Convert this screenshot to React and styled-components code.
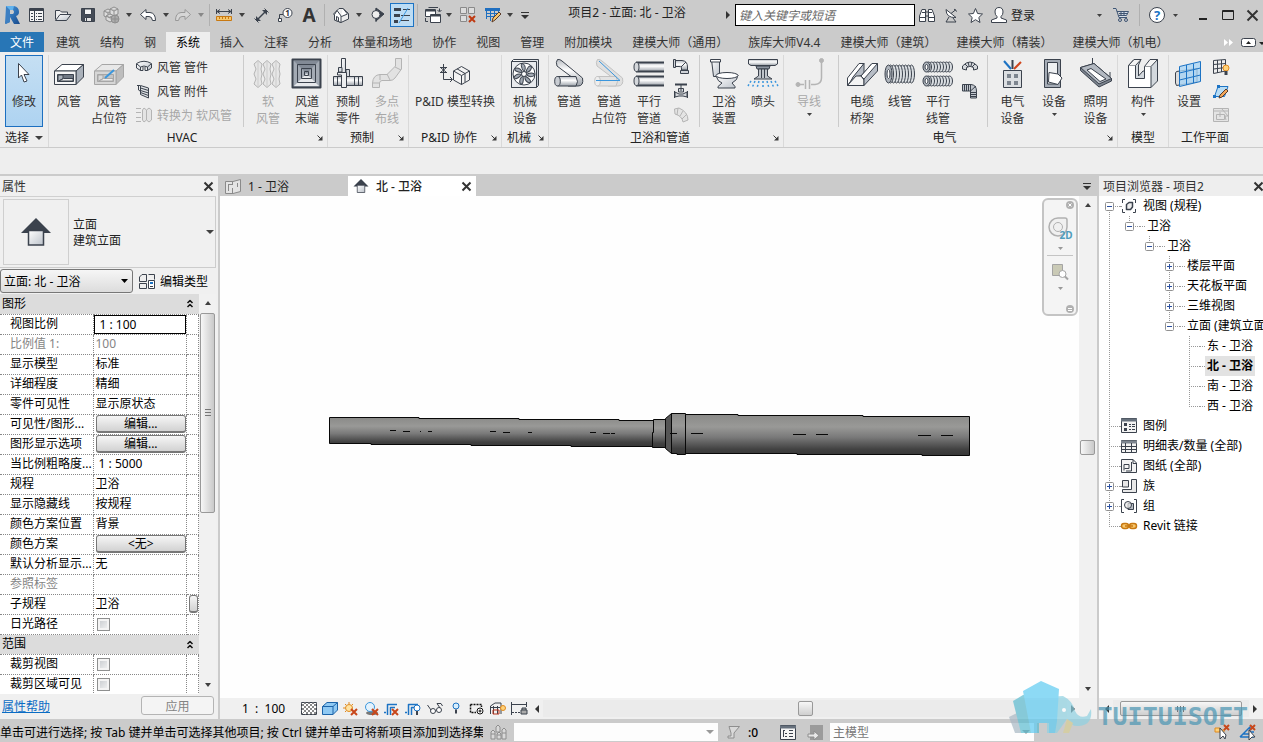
import React from 'react';

import styled, { createGlobalStyle, css } from 'styled-components';

const GlobalStyle = createGlobalStyle`
  * {
    box-sizing: border-box;
  }
  body {
    margin: 0;
    overflow: hidden;
  }
  body, button, input, select {
    font-family: "Noto Sans", "Noto Sans CJK SC", sans-serif;
    font-size: 12px;
  }
  button {
    background: none;
    border: none;
    color: inherit;
    padding: 0;
  }
  svg {
    display: block;
    flex: none;
    overflow: visible;
  }
`;

/*
 * icons
 */

const DARK = '#3b424d';
const OFF = '#b4b4b4';

const Icon = ({ w = 16, h = w, children, stroke = DARK, fill = 'none', sw = 1 }) => (
  <svg
      width={w}
      height={h}
      viewBox={`0 0 ${w} ${h}`}
      fill={fill}
      stroke={stroke}
      strokeWidth={sw}
      strokeLinejoin="round"
      aria-hidden="true">
    {children}
  </svg>
);

const Glyph = styled.text`
  fill: ${(props) => props.$color || '#333333'};
  font-family: "Noto Sans", sans-serif;
  font-size: ${(props) => props.$size}px;
  font-weight: bold;
  stroke: none;
  text-anchor: middle;
`;

const HiddenSvg = styled.svg`
  position: absolute;
`;

const Gradients = () => (
  <HiddenSvg width="0" height="0" aria-hidden="true">
    <defs>
      <linearGradient id="metal" x1="0" y1="0" x2="0" y2="1">
        <stop offset="0" stopColor="#b9bdc3" />
        <stop offset="0.4" stopColor="#ffffff" />
        <stop offset="1" stopColor="#9aa0a8" />
      </linearGradient>
      <linearGradient id="soft" x1="0" y1="0" x2="1" y2="1">
        <stop offset="0" stopColor="#ffffff" />
        <stop offset="1" stopColor="#bcc2ca" />
      </linearGradient>
      <linearGradient id="revit" x1="0" y1="0" x2="1" y2="1">
        <stop offset="0" stopColor="#4a9be0" />
        <stop offset="1" stopColor="#184a8c" />
      </linearGradient>
      <linearGradient id="pipe" x1="0" y1="0" x2="0" y2="1">
        <stop offset="0" stopColor="#8a8a88" />
        <stop offset="0.3" stopColor="#999997" />
        <stop offset="0.55" stopColor="#7a7a7a" />
        <stop offset="0.85" stopColor="#414141" />
        <stop offset="1" stopColor="#373737" />
      </linearGradient>
    </defs>
  </HiddenSvg>
);

const Caret = ({ w = 6, h = 4, color = '#404040' }) => (
  <Icon w={w} h={h} stroke="none" fill={color}><path d={`M0 0H${w}L${w / 2} ${h}Z`} /></Icon>
);
const Up = () => <Icon w={6} h={4} stroke="none" fill="#404040"><path d="M0 4H6L3 0Z" /></Icon>;
const Left = () => <Icon w={4} h={8} stroke="none" fill="#333"><path d="M4 0V8L0 4Z" /></Icon>;
const Right = () => <Icon w={4} h={8} stroke="none" fill="#333"><path d="M0 0V8L4 4Z" /></Icon>;
const MenuMark = () => <Icon w={8} h={7} stroke="none" fill="#333"><path d="M0 0H8V1H0ZM0 3H8L4 7Z" /></Icon>;
const Close = ({ w = 9, color = '#333' }) => (
  <Icon w={w} stroke={color} sw={2}><path d={`M0.5 0.5L${w - 0.5} ${w - 0.5}M${w - 0.5} 0.5L0.5 ${w - 0.5}`} /></Icon>
);
const Launcher = () => (
  <Icon w={6} stroke="#3a3a3a"><path d="M0.5 0.5L4 4" /><path d="M5.5 1V5.5H1Z" fill="#3a3a3a" stroke="none" /></Icon>
);

const RevitLogo = () => (
  <Icon w={18} h={18} stroke="none">
    <path d="M3 0H11Q16 1 16 6Q16 9 13 10L17 18H11L7 11V16L2 18Z M7 4V8H10Q12 6 10 4Z" fill="url(#revit)" fillRule="evenodd" />
    <path d="M3 0L7 4V16L3 18Z" fill="#3d7fc2" />
    <path d="M3 0H11L10 4H7Z" fill="#61b3ee" />
  </Icon>
);
const Browser = () => (
  <Icon w={15} h={14}>
    <path d="M0.5 0.5H14.5V13.5H0.5Z" fill="#f5f5f5" />
    <path d="M0.5 1.5H14.5M0.5 2.5H14.5M5.5 3V13" />
    <path d="M2 5.5H4M2 8.5H4M2 11.5H4M7 5.5H8M9 5.5H13M7 8.5H8M9 8.5H13M7 11.5H8M9 11.5H13" />
  </Icon>
);
const Open = () => (
  <Icon w={17} h={12}>
    <path d="M0.5 10.5V1.5H5L6.5 3H12.5V5" fill="#eee" />
    <path d="M0.5 11.5L5 5.5H16L11.5 11.5Z" fill="url(#soft)" />
  </Icon>
);
const Save = () => (
  <Icon w={14}>
    <path d="M0.5 0.5H13.5V13.5H1.5L0.5 12.5Z" fill="#454c57" />
    <path d="M3.5 1V6.5H10.5V1Z" fill="#f4f4f4" />
    <path d="M3.5 13V9.5H10.5V13" fill="#e3e3e3" />
    <path d="M5.5 10V13" />
  </Icon>
);
const Sync = () => (
  <Icon w={17} stroke="#8e8e8e" fill="#dcdcdc">
    <path d="M1 4L5 2L9 4V9L5 11L1 9ZM1 4L5 6L9 4M5 6V11" />
    <path d="M7 2L11 0L15 2V7L11 9L7 7ZM7 2L11 4L15 2M11 4V9" />
    <path d="M3 9L7 7L11 9V13L7 15L3 13ZM3 9L7 11L11 9" />
    <circle cx="12" cy="12" r="4" fill="#aaa" />
    <path d="M8 12H16M12 8V16" />
  </Icon>
);
const Undo = ({ off }) => (
  <Icon w={16} h={12} stroke={off ? '#999' : DARK} fill={off ? '#d6d6d6' : '#fff'}>
    <path
        d={off
          ? 'M15.5 5.5L10 0.5V3.5H6Q0.5 4 0.5 11.5H3.5Q4 7.5 7 7.5H10V10.5Z'
          : 'M0.5 5.5L6 0.5V3.5H10Q15.5 4 15.5 11.5H12.5Q12 7.5 9 7.5H6V10.5Z'} />
  </Icon>
);
const Dim = () => (
  <Icon w={16} h={12}>
    <path d="M0.5 0V5M15.5 0V5M1 2.5H15M4 0.5L1 2.5L4 4.5M12 0.5L15 2.5L12 4.5" />
    <path d="M0.5 7.5H15.5V11.5H0.5Z" fill="#f7c66b" stroke="#c87912" />
    <path d="M3.5 8V10M6.5 8V10M9.5 8V10M12.5 8V10" stroke="#c87912" />
  </Icon>
);
const Aligned = () => (
  <Icon w={15}>
    <path d="M3 12L12 3" strokeWidth="1.5" />
    <path d="M2 8V13H7ZM8 2H13V7Z" fill={DARK} stroke="none" />
    <path d="M0.5 10.5L4.5 14.5M10.5 0.5L14.5 4.5" />
  </Icon>
);
const Tag = () => (
  <Icon w={15} h={14}>
    <circle cx="9.5" cy="5" r="4.5" fill="#fff" />
    <path d="M5 6.5H1.5V11" />
    <Glyph x="9.5" y="8" $size={8}>1</Glyph>
    <path d="M0.5 10.5H3.5V13.5H0.5Z" fill="#fff" />
  </Icon>
);
const TextTool = () => <Icon w={14} h={14}><Glyph x="7" y="14" $size={19}>A</Glyph></Icon>;
const House = () => (
  <Icon w={16} h={15}>
    <path d="M0.5 6L6 0.5H10L15.5 5.5V11L8 14.5L1.5 12V7Z" fill="#eee" />
    <path d="M10 0.5L14.5 6L8.5 8.5L4 2.5L1.5 6.5V12L8 14.5V8M3.5 12V8.5L5.5 9.5V13" fill="#fff" />
  </Icon>
);
const Section = () => (
  <Icon w={13} h={14}>
    <path d="M5 0L13 6L5 13Z" fill={DARK} />
    <circle cx="5" cy="6.5" r="4" fill="#eee" />
    <path d="M5 0.5V2.5M5 10.5V14" />
  </Icon>
);
const ThinLines = () => (
  <Icon w={16} h={15}>
    <path d="M0 1.5H7M0 7.5H6M0 13.5H4" strokeWidth="3" />
    <path d="M9 1.5H16M7 7.5H16M6 12.5H15" />
    <path d="M14 0L5 15" stroke="#3a96dd" />
  </Icon>
);
const Windows = () => (
  <Icon w={17} h={16}>
    <path d="M3.5 0.5H13M14.5 1.5V4M0.5 11V14.5H3" />
    <path d="M12.5 3L14.5 5L16.5 3" />
    <path d="M0.5 2.5H10.5V9.5H0.5Z" fill="#fff" />
    <path d="M5.5 7.5H15.5V15.5H5.5Z" fill="#fff" />
    <path d="M6 8.5H15M1 3.5H10" strokeWidth="2" />
  </Icon>
);
const CloseHidden = () => (
  <Icon w={16} stroke="#8a8a8a" fill="#ddd">
    <path d="M0.5 0.5H6.5V6.5H0.5ZM8.5 0.5H14.5V6.5H8.5ZM0.5 8.5H6.5V14.5H0.5Z" />
    <path d="M9 9L15 15M15 9L9 15" stroke="#bf3a12" strokeWidth="2" />
  </Icon>
);
const SheetPen = () => (
  <Icon w={17} h={15} stroke="#1f6fc0">
    <path d="M0 1.5H15" strokeWidth="3" />
    <path d="M1.5 2V11M5.5 2V13M9.5 2V9M13.5 2V5M1 5.5H14M1 8.5H10" />
    <path d="M7 14L8 10L14 4L16 6L10 12Z" fill="#f7c66b" stroke="#5a3a28" />
  </Icon>
);
const Binoculars = () => (
  <Icon w={16} h={15}>
    <path d="M0.5 13.5V8L3 1.5H6.5V13.5ZM15.5 13.5V8L13 1.5H9.5V13.5Z" fill="#fff" />
    <path d="M6.5 4H9.5V8H6.5M1 9.5H6.5M9.5 9.5H15M3 4.5H6M10 4.5H13" />
  </Icon>
);
const Dish = () => (
  <Icon w={13} h={15}>
    <path d="M1 1.5Q1 10 11 9.5Z" fill="#fff" />
    <path d="M6 5.5L11 1.5M9 1L12 3.5M4 9L1 14H11L8 10" />
  </Icon>
);
const Star = () => (
  <Icon w={15} fill="#fff"><path d="M7.5 0.5L9.6 5.5L14.5 6L10.8 9.5L12 14.5L7.5 11.7L3 14.5L4.2 9.5L0.5 6L5.4 5.5Z" /></Icon>
);
const User = () => (
  <Icon w={16} fill="#fff">
    <path d="M8 0.5Q12 0.5 12 5Q12 8 10 9.5L10 11L15.5 13V15.5H0.5V13L6 11V9.5Q4 8 4 5Q4 0.5 8 0.5Z" />
  </Icon>
);
const Cart = () => (
  <Icon w={16} h={14} stroke="#3f5573">
    <path d="M0 0.5H3L6 9.5H14M4 3.5H15.5L13.5 7.5H5.5" fill="#d7e0ec" />
    <path d="M6 5.5H14M8 4V8M11 4V8" />
    <circle cx="7" cy="12" r="1.5" />
    <circle cx="13" cy="12" r="1.5" />
  </Icon>
);
const Help = () => (
  <Icon w={16}>
    <circle cx="8" cy="8" r="7.5" fill="#fff" />
    <Glyph x="8" y="13" $size={13} $color="#1c73c4">?</Glyph>
  </Icon>
);

/* ribbon, large */

const Cursor = () => (
  <Icon w={32}><path d="M10.5 5.5V20L13.5 17L16 24L19 23L16 16.5H21Z" fill="#fff" /></Icon>
);
const Duct = ({ off }) => (
  <Icon w={32} stroke={off ? '#a6a6a6' : DARK}>
    <path d="M1.5 13L9 6.5H30.5L23 13Z" fill={off ? '#e8e8e8' : '#fff'} />
    <path d="M23 13L30.5 6.5V19L23 26.5Z" fill={off ? '#bdbdbd' : '#aab1ba'} />
    <path d="M1.5 13H23V26.5H1.5Z" fill={off ? '#d6d6d6' : '#f5f5f5'} />
    <path d="M4.5 16.5H20.5V23.5H4.5Z" fill={off ? '#c4c4c4' : '#707883'} />
    <path d="M5 17H10V20.5L5 23.5Z" fill={off ? '#d9d9d9' : '#aab1ba'} />
    <path d="M10.5 20.5H20V23H6Z" fill="#eee" />
    {off ? <path d="M12 20L21 12" stroke="#3a96dd" strokeWidth="2" /> : null}
  </Icon>
);
const Flex = () => (
  <Icon w={32} stroke={OFF} fill="#e6e6e6">
    {[2, 11, 20].map((x) => (
      <path key={x} d={`M${x} 6L${x + 4} 2.5L${x + 8} 6L${x + 7} 11L${x + 8} 16L${x + 7} 21L${x + 8} 26L${x + 4} 29.5L${x} 26L${x + 2} 21L${x} 16L${x + 2} 11Z`} />
    ))}
    <path d="M6 3V29M15 3V29M24 3V29" stroke="#ccc" />
  </Icon>
);
const Terminal = () => (
  <Icon w={32}>
    <path d="M1.5 1.5H29.5V29.5H1.5Z" fill="#a3aab4" strokeWidth="2" />
    <path d="M3 3L15.5 15.5L28 3Z" fill="#828a96" stroke="none" />
    <path d="M3 28L15.5 15.5L28 28Z" fill="#e6e8eb" stroke="none" />
    <path d="M6.5 6.5H24.5V24.5H6.5ZM10.5 10.5H20.5V20.5H10.5ZM13.5 13.5H17.5V17.5H13.5Z" />
  </Icon>
);
const Fabrication = () => (
  <Icon w={32}>
    <path d="M9.5 0.5H13.5V29H9.5Z" fill="url(#soft)" />
    <path d="M6.5 9.5H10V14H6.5ZM14 11.5H17.5V21H14Z" fill="#d7dbe0" />
    <path d="M1.5 18.5H30.5V27.5H1.5Z" fill="url(#metal)" />
    <path d="M5.5 14.5H14.5V29.5H9.5V17H5.5Z" fill="#eceef0" />
    <path d="M22.5 18V28M26.5 18V28M5.5 18V28" />
  </Icon>
);
const MultiPoint = () => (
  <Icon w={32} stroke={OFF} fill="#e2e2e2">
    <path d="M24.5 0.5H30.5V11L24 20Q22 22.5 19 22.5H11Q8.5 23 8.5 25V29.5H1.5V25Q2 17 9 16.5H16L24.5 8Z" />
    <path d="M24 9L30 12M16 16L19 22M9 16V22M2 25H8" />
  </Icon>
);
const PidConvert = () => (
  <Icon w={32}>
    <path d="M4.5 6V21.5H13M11 19L13.5 21.5L11 24M1 9.5H8M1 14.5H8M2 10L7 14M7 10L2 14" />
    <path d="M14.5 13L22.5 8.5L30.5 13V22L22.5 26.5L14.5 22Z" fill="#f3f3f3" />
    <path d="M14.5 13L22.5 17.5L30.5 13M22.5 17.5V26.5M18 10.8L26 15.5V24" />
  </Icon>
);
const Fan = () => (
  <Icon w={32}>
    <path d="M2.5 3.5L4.5 1.5H29.5V27.5L27.5 29.5H2.5Z" fill="url(#soft)" />
    <path d="M2.5 3.5H27.5V29.5H2.5Z" fill="#e8eaed" />
    <circle cx="15" cy="16" r="11" fill="#fff" />
    {[0, 51, 103, 154, 206, 257, 309].map((a) => (
      <path key={a} d="M15 14Q18 9 14 5.5Q10 6 15 14Z" fill="#a3aab4" transform={`rotate(${a} 15 16)`} />
    ))}
    <circle cx="15" cy="16" r="2.5" fill="#fff" />
  </Icon>
);
const Pipe = ({ off }) => (
  <Icon w={32} stroke={off ? '#c2c2c2' : DARK}>
    <path d="M4.5 1.5Q7 1 9 3L29.5 20Q31 28 25 28H15L20 20L4 8Q2.5 4 4.5 1.5Z" fill={off ? '#e0e0e0' : 'url(#metal)'} />
    <path d="M4.5 18.5H23Q26 24 23 28H4.5Q1.5 23 4.5 18.5Z" fill={off ? '#e3e3e3' : 'url(#metal)'} />
    <ellipse cx="4.5" cy="23.2" rx="2.8" ry="4.7" fill={off ? '#eee' : '#c9cdd3'} />
    {off ? <path d="M6 3L27 22.5H3" stroke="#3a96dd" /> : null}
  </Icon>
);
const Pipes = () => (
  <Icon w={32}>
    {[4.5, 18.5].map((y) => (
      <g key={y}>
        <path d={`M3 ${y}H31V${y + 9}H3Z`} stroke="none" fill="url(#metal)" />
        <path d={`M3 ${y}H31M3 ${y + 9}H31`} strokeWidth="2" />
        <ellipse cx="3.5" cy={y + 4.5} rx="2.5" ry="4.5" fill="#d5d8dc" />
      </g>
    ))}
  </Icon>
);
const Toilet = () => (
  <Icon w={32}>
    <path d="M3.5 1.5H11.5V18.5H5.5Z" fill="url(#soft)" />
    <path d="M2.5 1.5H12.5V4H2.5Z" fill="#fff" />
    <path d="M8 18Q10 24 14 25L10 28.5V30H27V28.5L24 25Q30 22 30 17Z" fill="url(#soft)" />
    <ellipse cx="19" cy="17.5" rx="11" ry="3" fill="#fff" />
  </Icon>
);
const Sprinkler = () => (
  <Icon w={32}>
    <path d="M1.5 1.5H30.5V6L28 7.5H4L1.5 6Z" fill="url(#metal)" />
    <path d="M9 8H23L22 11H10Z" fill="#8d95a0" />
    <path d="M11.5 11V18L7 21H25L20.5 18V11ZM14.5 11V20M17.5 11V20" fill="#bfc4ca" />
    <path
        d="M4 23L1 28M8 23L5 30M12 23L10 30M16 23V30M20 23L22 30M24 23L27 30M28 23L31 28"
        stroke="#3a96dd"
        strokeDasharray="2 2"
        strokeWidth="1.5" />
  </Icon>
);
const Wire = () => (
  <Icon w={32} stroke={OFF}>
    <path d="M5 26.5H11M18 26.5H22Q28.5 26 28.5 20V3M12.5 22V31M16.5 22V31" strokeWidth="1.5" />
    <circle cx="5" cy="26.5" r="2" fill={OFF} />
    <circle cx="28.5" cy="2.5" r="2" fill={OFF} />
  </Icon>
);
const Tray = () => (
  <Icon w={32}>
    <path d="M1.5 20L13 5.5H18L7 20L1.5 27.5Z" fill="#fff" />
    <path d="M18 5.5V17L10 19L4 25L7 19Z" fill="#b7bdc6" />
    <path d="M1.5 27.5L10 18H15L18 22V27.5Z" fill="#f4f4f4" />
    <path d="M15 18L26 5.5H31.5V13L18 27.5V21Z" fill="#b7bdc6" />
    <path d="M15 18L26 5.5H31.5L18 21Z" fill="#fff" />
  </Icon>
);
const Coil = ({ y, h }) => (
  <g>
    {[28, 25, 22, 19, 16, 13, 10, 7].map((x) => (
      <ellipse key={x} cx={x - 0.5} cy={y + h / 2} rx="3" ry={h / 2} fill="#d9dde1" />
    ))}
    <ellipse cx="4.5" cy={y + h / 2} rx="3.5" ry={h / 2} fill="#aeb4bc" />
    <ellipse cx="4.5" cy={y + h / 2} rx="1.5" ry={h / 4} fill="#fff" />
  </g>
);
const Conduit = () => <Icon w={32}><Coil y={7} h={18} /></Icon>;
const Conduits = () => <Icon w={32}><Coil y={4} h={10} /><Coil y={18} h={10} /></Icon>;
const ElecEquip = () => (
  <Icon w={32}>
    <path d="M15.5 11V2" strokeWidth="2" />
    <path d="M14 11L7 3" stroke="#1c73c4" strokeWidth="2" />
    <path d="M17 11L24 4" stroke="#d0451b" strokeWidth="2" />
    <path d="M6.5 12.5H24.5V29.5H6.5Z" fill="#dcdfe2" />
    <path d="M10 16H14V20H10ZM17 16H21V20H17ZM10 23H14V27H10ZM17 23H21V27H17Z" fill="#7d858f" stroke="none" />
  </Icon>
);
const Switch = () => (
  <Icon w={32}>
    <path d="M6.5 1.5H22.5V29.5H6.5Z" fill="#a5acb6" />
    <path d="M9.5 4.5H19.5V26H9.5Z" fill="#eef0f2" />
    <path d="M11 14.5L20 16L24 20L20 26.5L10.5 24Z" fill="#fff" />
  </Icon>
);
const Light = () => (
  <Icon w={32}>
    <path d="M12.5 0V6M30 14V20" />
    <path d="M0.5 9.5L14 5.5L31.5 20.5V23L19 29L0.5 12.5Z" fill="#7d858f" />
    <path d="M0.5 9.5L14 5.5L31.5 20.5L19 26Z" fill="#b3b9c1" />
    <path d="M7 12L11 10.5L26 21L20 23.5Z" fill="#fff" />
  </Icon>
);
const Component = () => (
  <Icon w={32}>
    <path d="M1.5 7.5L7 1.5H14L11.5 7V18L16 13H20V7L25 1.5H30.5V23L24 29.5H1.5Z" fill="#d3d8dd" />
    <path d="M1.5 7.5H8.5V20.5H17.5V8.5H24V29.5H1.5Z" fill="#fff" />
    <path d="M1.5 7.5L7 1.5H14L8.5 7.5M17.5 8.5L23 1.5H30.5L24 8.5" fill="#f4f4f4" />
  </Icon>
);
const WorkPlane = () => (
  <Icon w={32}>
    <path d="M3.5 13.5L24 10.5V24L3.5 27.5L2.5 25V15Z" fill="#ddd" />
    <path d="M6.5 8.5L27.5 3.5V23.5L6.5 28.5Z" fill="#a9d5f5" fillOpacity="0.8" stroke="#1c73c4" />
    <path d="M13.5 7V27M20.5 5.5V25M6.5 15L27.5 10M6.5 22L27.5 17" stroke="#1c73c4" />
  </Icon>
);

/* ribbon, small */

const DuctFitting = () => (
  <Icon w={16}>
    <path d="M0.5 4.5Q8 0 15.5 4.5V9L11.5 11.5V8Q8 6 4.5 8V11.5L0.5 9Z" fill="url(#soft)" />
    <path d="M4.5 8L1 5M11.5 8L15 5M4.5 11.5H7V8M9 8V11.5H11.5" />
  </Icon>
);
const DuctAccessory = () => (
  <Icon w={16}>
    <path d="M4.5 2.5L12.5 5V15L4.5 11.5ZM4.5 5L12.5 7.5M4.5 7.5L12.5 10M4.5 9.5L12.5 12.5M1 2.5H4M2.5 3V7L4 8" fill="#dfe2e6" />
  </Icon>
);
const ToFlex = () => (
  <Icon w={16} stroke={OFF} fill="#e4e4e4">
    <path d="M0 1.5H5M0 5.5H5M0 10.5H5M0 14.5H5" />
    <path d="M6.5 3L8 1L10.5 3V13L8 15L6.5 13ZM10.5 3L13 1L15.5 3V13L13 15L10.5 13Z" />
  </Icon>
);
const PipeFitting = () => (
  <Icon w={16}>
    <path d="M1.5 1.5H9Q14.5 2 14.5 8V11H8.5V8.5Q8 7.5 6 7.5H1.5Z" fill="url(#metal)" />
    <path d="M0.5 0.5H2.5V8.5H0.5ZM7.5 11.5H15.5V14.5H7.5Z" fill="#cfd3d8" />
    <path d="M8 8L13 3" />
  </Icon>
);
const Valve = () => (
  <Icon w={16}>
    <path d="M2 1.5H14" strokeWidth="2" />
    <path d="M8 2V8M5.5 5.5H10.5V9H5.5ZM1.5 8V15M14.5 8V15M2 9L6 11H10L14 9V14L10 13H6L2 14Z" fill="#d5d8dc" />
  </Icon>
);
const FlexPipe = () => (
  <Icon w={16} stroke={OFF} fill="#e4e4e4">
    <path d="M1.5 2L6 1Q15 5 15 13L10 15Q9 9 2 7ZM5 1L4 8M10 4L7 9M13 8L9 12" />
  </Icon>
);
const ConduitFitting = () => (
  <Icon w={16}>
    <path d="M0.5 7Q8 -1 15.5 7V10L11.5 11V8.5Q8 6 4.5 8.5V11L0.5 10Z" fill="#d5d8dc" />
    <path d="M3 5L6 8M6 3L7 7M10 3L9 7M13 5L10 8" />
  </Icon>
);
const FlexConduit = () => (
  <Icon w={16}>
    <path d="M0.5 1.5H9Q14.5 2 14.5 8V15H8.5V8H0.5Z" fill="#c2c7ce" />
    <path d="M2.5 1V8M4.5 1V8M6.5 1V8M8.5 1V8L14 3M8.5 9.5H15M8.5 11.5H15M8.5 13.5H15" />
  </Icon>
);
const ShowPlane = () => (
  <Icon w={17} h={16}>
    <path d="M0.5 1.5L12.5 0.5V12L0.5 14.5ZM4.5 1V14M8.5 1V13M0.5 5.5L12.5 4.5M0.5 10L12.5 8.5" fill="#eee" />
    <circle cx="13" cy="9" r="3" fill="#ffd27a" stroke="#e08a1e" />
    <path d="M13 12V16" strokeWidth="3" />
  </Icon>
);
const RefPlane = () => (
  <Icon w={16}>
    <path d="M1.5 13.5L5 3.5H15L11.5 13.5Z" fill="#b7dcf5" stroke="#1c73c4" />
    <path d="M4 2H7V5H4ZM0 12H3V15H0Z" fill="#1c73c4" stroke="none" />
    <path d="M6 15L7 12L13 6L15 8L9 14Z" fill="#f2a65a" stroke="#5a3a28" />
  </Icon>
);
const Viewer = () => (
  <Icon w={16} stroke={OFF}>
    <path d="M0.5 1.5H15.5V14.5H0.5ZM0.5 4H15M3.5 7.5H11.5V12.5H3.5ZM7 5V10M9 2L15 9L12 9L13 13" fill="#e4e4e4" />
  </Icon>
);

/* views and browser */

const Arrow = ({ w = 30, h = 28 }) => (
  <svg width={w} height={h} viewBox="0 0 30 28" aria-hidden="true">
    <path d="M0 15L15 0L30 15Z" fill="#3b424d" />
    <path d="M7.5 12.5H22.5V27H7.5Z" fill="url(#soft)" stroke="#3b424d" strokeWidth="1.5" />
  </svg>
);
const PlanView = () => (
  <Icon w={16} h={15} stroke="#8a8a8a">
    <path d="M0.5 2.5H8L15.5 0.5V12.5L8 14.5H0.5Z" fill="#e4e4e4" />
    <path d="M3.5 5V12M3.5 5.5H7M7.5 3V6M7.5 9V14M12.5 4V8" />
  </Icon>
);
const EditType = () => (
  <Icon w={16} h={15}>
    <path d="M0.5 3L3 0.5H7.5V7.5H0.5ZM9.5 0.5H15.5V5.5M0.5 9.5H7.5V14.5H0.5Z" fill="#eee" />
    <path d="M9.5 6.5H15.5V14.5H9.5Z" fill="#fff" />
    <path d="M11 8H14V10H11Z" fill="#1c73c4" stroke="none" />
    <path d="M11 12.5H14" />
  </Icon>
);
const Collapse = () => (
  <Icon w={6} h={9} stroke="#111"><path d="M0.5 4L3 1.5L5.5 4M0.5 8L3 5.5L5.5 8" strokeWidth="1.5" /></Icon>
);
const ViewsIcon = () => (
  <Icon w={16}>
    <path d="M4 1.5H1.5V5M1.5 11V14.5H4M12 1.5H14.5V5M14.5 11V14.5H12" />
    <path d="M5.5 6.5L8 4.5H11.5V9L9.5 11.5H5.5Z" fill="#eee" strokeWidth="1.5" />
  </Icon>
);
const LegendIcon = () => (
  <Icon w={16}>
    <path d="M0.5 0.5H15.5V14.5H0.5Z" fill="#f3f3f3" />
    <path d="M0 2H16" strokeWidth="3" stroke="#66707c" />
    <path d="M3 5H6V8H3ZM3 10H6V13H3Z" fill={DARK} stroke="none" />
    <path d="M8 6.5H10M11 6.5H14M8 8.5H10M11 8.5H14M8 11.5H10M11 11.5H14" />
  </Icon>
);
const TableIcon = () => (
  <Icon w={16} h={13}>
    <path d="M0.5 0.5H15.5V12.5H0.5Z" fill="#f3f3f3" />
    <path d="M0 2H16" strokeWidth="3" stroke="#7d858f" />
    <path d="M1 6.5H15M1 9.5H15M4.5 3V12M10.5 3V12" />
  </Icon>
);
const SheetIcon = () => (
  <Icon w={16} h={14}>
    <path d="M0.5 0.5H12L15.5 4V13.5H0.5Z" fill="#f3f3f3" />
    <path d="M3 11.5V5.5H8V9.5H3.5M10.5 3V12H5M12 0.5V4.5H15.5" />
  </Icon>
);
const FamilyIcon = () => (
  <Icon w={15}><path d="M0.5 1.5H6.5V8H0.5ZM9.5 0.5H14.5V13.5H0.5V10.5H9.5Z" fill="#e8e8e8" /></Icon>
);
const GroupIcon = () => (
  <Icon w={16}>
    <path d="M3 1.5H0.5V14.5H3M13 1.5H15.5V14.5H13" />
    <path d="M7 5.5H12.5V11.5H7Z" fill="#b9bec5" />
    <circle cx="7" cy="7" r="3.5" fill="#e8e8e8" fillOpacity="0.7" />
  </Icon>
);
const LinkIcon = () => (
  <Icon w={16} h={8} stroke="#c87912">
    <rect x="0.5" y="1.5" width="7" height="5" rx="2.5" fill="#f7c66b" strokeWidth="1.5" />
    <rect x="8.5" y="1.5" width="7" height="5" rx="2.5" fill="#f7c66b" strokeWidth="1.5" />
    <path d="M4 4H12" strokeWidth="1.5" />
  </Icon>
);

/* view control bar and status bar */

const Mesh = () => (
  <Icon w={16} h={13}>
    <path d="M0.5 0.5H15.5V12.5H0.5Z" fill="#fff" />
    <path
        d="M0.5 4.5L4.5 0.5M0.5 8.5L8.5 0.5M0.5 12.5L12.5 0.5M4.5 12.5L15.5 1.5M8.5 12.5L15.5 5.5M12.5 12.5L15.5 9.5M3.5 0.5L15.5 12.5M7.5 0.5L15.5 8.5M11.5 0.5L15.5 4.5M0.5 1.5L11.5 12.5M0.5 5.5L7.5 12.5"
        stroke="#888" />
  </Icon>
);
const BoxIcon = () => (
  <Icon w={16} h={13} stroke="#1c63a8">
    <path d="M0.5 4.5L5 0.5H15.5V8L11 12.5H0.5Z" fill="#8fc9f3" />
    <path d="M0.5 4.5H11V12.5M11 4.5L15.5 0.5" />
  </Icon>
);
const RedX = () => <path d="M8 7L14 13M14 7L8 13" stroke="#c8471b" strokeWidth="2" />;
const Sun = () => (
  <Icon w={15} h={14} stroke="#e08a1e">
    <circle cx="6" cy="6" r="3.5" fill="#ffe3a3" />
    <path d="M6 0V2M0 6H2M2 2L3 3M10 2L9 3M2 10L3 9" />
    <RedX />
  </Icon>
);
const Shadow = () => (
  <Icon w={15} h={14} stroke="#3a96dd">
    <ellipse cx="8" cy="11" rx="6" ry="2" fill="#777" stroke="none" />
    <circle cx="6" cy="5" r="4.5" fill="#e3f2fd" />
    <RedX />
  </Icon>
);
const Crop = ({ bulb }) => (
  <Icon w={17} h={14} stroke="#1c73c4">
    <path d="M0 10.5H2M3.5 13V2.5H13M6.5 13V5.5H11" strokeWidth="1.5" />
    {bulb ? <circle cx="12" cy="6" r="3" fill="#fff" /> : <RedX />}
    {bulb ? <path d="M12 9V13" stroke={DARK} strokeWidth="2" /> : null}
  </Icon>
);
const Glasses = () => (
  <Icon w={16} h={12}>
    <circle cx="6" cy="8" r="2.5" fill="#fff" />
    <circle cx="12" cy="7" r="2.5" fill="#fff" />
    <path d="M4 7L0.5 2M13 5L10 0.5H14L15.5 3" />
  </Icon>
);
const Bulb = () => (
  <Icon w={8} h={13} stroke="#1c73c4">
    <circle cx="4" cy="4" r="3" fill="#d8eefc" />
    <path d="M3 8.5H5M3 10.5H5" stroke={DARK} strokeWidth="2" />
  </Icon>
);
const Temp = () => (
  <Icon w={15} h={13} stroke="#111">
    <path d="M1.5 2.5H12.5V5M1.5 2.5V10.5H7" strokeDasharray="2 1" strokeWidth="1.5" />
    <circle cx="11" cy="9" r="3" fill="#fff" />
    <circle cx="11" cy="9" r="1" />
  </Icon>
);
const Analytic = () => (
  <Icon w={16} h={14}>
    <path d="M0.5 12V4L5 1H11V12M3.5 4V12M7.5 4V12M0 5.5H12" />
    <path d="M3 8V12H9V8Z" stroke="#b8321a" />
    <circle cx="13" cy="6" r="2.5" fill="#ffd27a" stroke="#e08a1e" />
  </Icon>
);
const Constraints = () => (
  <Icon w={16} h={13}>
    <path d="M0.5 0V13M15.5 0V5M1 2.5H15" />
    <path d="M1 10.5H9" strokeDasharray="2 1" />
    <path d="M10 8H16V12H10ZM11 8V6H15V8" fill="#aaa" />
  </Icon>
);
const Filter = () => (
  <Icon w={14} h={15} stroke="#8e8e8e"><path d="M3 1.5H13.5L8 8V13H2V11H5V8Z" fill="#d9d9d9" /></Icon>
);
const WorksetsOff = () => (
  <Icon w={17} h={16} stroke="#8e8e8e" fill="#d9d9d9">
    <path d="M6 3L8 1L10 3V8H6ZM1 8L3 6L5 8V15H1ZM7 10L9 8L11 10V15H7ZM12 6L14 4L16 6V15H12Z" />
    <path d="M1 10H5M7 11H11M12 9H16" />
  </Icon>
);
const DesignOption = () => (
  <Icon w={16} h={15}>
    <path d="M0.5 0.5H15.5V14.5H0.5Z" fill="#f5f5f5" />
    <path d="M0 2H16" strokeWidth="3" stroke="#66707c" />
    <path d="M3 5.5H5M3.5 6V12M5 8.5H7M5 11.5H7M9 5.5H13M9 8.5H13M9 11.5H13" />
  </Icon>
);
const AddTo = () => (
  <Icon w={15} h={15} stroke="#8e8e8e">
    <path d="M2 0H15V15H2Z" fill="#9b9b9b" stroke="none" />
    <path d="M0 9H6V6L11 10.5L6 15V12H0Z" fill="#e8e8e8" />
  </Icon>
);
const PickLink = () => (
  <Icon w={17} h={16} stroke="#e08a1e">
    <path d="M1 4H6V8H1ZM6 6H10V8" fill="#ffd27a" />
    <path d="M10 1L15 6M15 1L10 6" stroke="#c8471b" strokeWidth="2" />
    <path d="M6 4V15L9 12L11 15L12 11Z" fill="#fff" stroke={DARK} />
  </Icon>
);
const PickFace = () => (
  <Icon w={17} h={16} stroke="#1c73c4">
    <path d="M0 13L10 3V8H14M0 13H14M3 10H12" strokeWidth="1.5" />
    <path d="M10 1L15 6M15 1L10 6" stroke="#c8471b" strokeWidth="2" />
    <path d="M9 6V16L12 13L15 13Z" fill="#fff" stroke={DARK} />
  </Icon>
);

/*
 * title bar
 */

const Page = styled.div`
  background: #cbcbcb;
  color: #222222;
  display: flex;
  flex-direction: column;
  height: 100vh;
  position: relative;
`;

const TitleBar = styled.header`
  align-items: center;
  display: flex;
  flex: none;
  height: 32px;
  padding-bottom: 2px;
`;

const ToolButton = styled.button`
  align-items: center;
  display: flex;
  flex: none;
  height: 24px;
  justify-content: center;
  width: ${(props) => props.$w || 24}px;
  ${(props) => props.$on && css`
    background: #bcdcf4;
    border: 1px solid #1c73c4;
  `}
`;

const WindowButtons = styled.div`
  display: flex;
  gap: 1px;
  margin-left: 12px;
`;

const Divider = styled.span`
  background: #b0b0b0;
  flex: none;
  height: 22px;
  margin: 0 3px;
  width: 1px;
`;

const WindowTitle = styled.h1`
  flex: 1;
  font-size: 12px;
  font-weight: normal;
  line-height: 20px;
  margin: 0;
  overflow: hidden;
  padding-bottom: 4px;
  text-align: center;
  white-space: nowrap;
`;

const SearchInput = styled.input`
  background: #ffffff;
  border: 1px solid #000000;
  flex: none;
  font-style: italic;
  height: 22px;
  padding: 0 3px;
  width: 180px;
  &::placeholder {
    color: #666666;
    opacity: 1;
  }
`;

const Login = styled.button`
  flex: none;
  text-align: left;
  width: 81px;
`;

const tools = [
  ['Revit', 24, RevitLogo],
  ['主视图', 24, Browser],
  ['打开', 30, Open],
  ['保存', 20, Save],
  ['同步', 26, Sync],
  ['同步选项', 10, Caret],
  ['放弃', 28, Undo],
  ['放弃选项', 8, Caret],
  ['重做', 26, () => <Undo off />],
  ['重做选项', 10, () => <Caret color="#888" />],
  null,
  ['测量', 22, Dim],
  ['测量选项', 14, Caret],
  ['对齐标注', 24, Aligned],
  ['标记', 24, Tag],
  ['文字', 24, TextTool],
  null,
  ['三维视图', 26, House],
  ['三维视图选项', 10, Caret],
  ['剖面', 26, Section],
  ['细线', 24, ThinLines],
  null,
  ['切换窗口', 24, Windows],
  ['切换窗口选项', 8, Caret],
  ['关闭隐藏对象', 30, CloseHidden],
  ['用户界面', 20, SheetPen],
  ['用户界面选项', 14, Caret]
];

const Title = () => (
  <TitleBar>
    {tools.map((tool, i) => {
      if (!tool) {
        return <Divider key={i} />;
      }
      const [label, w, ToolIcon] = tool;
      return <ToolButton key={label} aria-label={label} $w={w} $on={label === '细线'}><ToolIcon /></ToolButton>;
    })}
    <ToolButton aria-label="自定义" $w={16}><MenuMark /></ToolButton>
    <WindowTitle>项目2 - 立面: 北 - 卫浴</WindowTitle>
    <ToolButton aria-label="展开搜索" $w={14}><Right /></ToolButton>
    <SearchInput aria-label="搜索" placeholder="键入关键字或短语" />
    <ToolButton aria-label="查找"><Binoculars /></ToolButton>
    <ToolButton aria-label="通讯中心"><Dish /></ToolButton>
    <ToolButton aria-label="收藏夹"><Star /></ToolButton>
    <ToolButton aria-label="用户"><User /></ToolButton>
    <Login>登录</Login>
    <ToolButton aria-label="登录选项" $w={14}><Caret w={5} h={3} /></ToolButton>
    <ToolButton aria-label="商店" $w={30}><Cart /></ToolButton>
    <Divider />
    <ToolButton aria-label="帮助" $w={28}><Help /></ToolButton>
    <ToolButton aria-label="帮助选项" $w={8}><Caret w={5} h={3} /></ToolButton>
    <WindowButtons>
      <ToolButton aria-label="最小化">
        <Icon w={8} h={10} stroke="#222" sw={2}><path d="M0 9H8" /></Icon>
      </ToolButton>
      <ToolButton aria-label="最大化">
        <Icon w={12} h={10} stroke="#222"><path d="M0.5 0.5H11.5V9.5H0.5ZM0 1.5H12" /></Icon>
      </ToolButton>
      <ToolButton aria-label="关闭" $w={22}><Close w={11} /></ToolButton>
    </WindowButtons>
  </TitleBar>
);

/*
 * ribbon
 */

const TabBar = styled.nav`
  align-items: stretch;
  display: flex;
  flex: none;
  height: 20px;
`;

const Tab = styled.button`
  background: ${(props) => (props.$active ? '#eeeeee' : 'none')};
  color: ${(props) => (props.$active ? '#000000' : '#333333')};
  flex: none;
  line-height: 20px;
  padding: 1px 10px 0;
  white-space: nowrap;
`;

const FileTab = styled(Tab)`
  background: #2876b6;
  color: #ffffff;
  margin-right: 2px;
`;

const TabEnd = styled.div`
  align-items: center;
  display: flex;
  gap: 8px;
  margin-left: auto;
`;

const tabs = [
  '建筑', '结构', '钢', '系统', '插入', '注释', '分析', '体量和场地', '协作', '视图', '管理', '附加模块',
  '建模大师（通用）', '族库大师V4.4', '建模大师（建筑）', '建模大师（精装）', '建模大师（机电）'
];

const Tabs = () => (
  <TabBar>
    <FileTab>文件</FileTab>
    {tabs.map((name) => <Tab key={name} $active={name === '系统'}>{name}</Tab>)}
    <TabEnd>
      <Icon w={9} h={7} stroke="none" fill="#fff"><path d="M0 0L4 3.5L0 7ZM5 0L9 3.5L5 7Z" /></Icon>
      <Icon w={22} h={9}>
        <rect x="0.5" y="0.5" width="14" height="8" rx="2" fill="#fff" />
        <path d="M5 6H10L7.5 3ZM18 4H24L21 7Z" fill="#222" stroke="none" />
      </Icon>
    </TabEnd>
  </TabBar>
);

const RibbonBar = styled.section`
  background: #eeeeee;
  border-bottom: 1px solid #cbcbcb;
  display: flex;
  flex: none;
  height: 96px;
  overflow: hidden;
  padding-top: 3px;
`;

const Panel = styled.div`
  border-right: 1px solid #d9d9d9;
  display: flex;
  flex: none;
  flex-direction: column;
  width: ${(props) => props.$w}px;
  &:last-child {
    border: none;
  }
`;

const PanelTools = styled.div`
  align-items: stretch;
  display: flex;
  flex: none;
  height: 74px;
  justify-content: ${(props) => props.$justify || 'flex-start'};
`;

const PanelLabel = styled.div`
  align-items: center;
  display: flex;
  gap: 6px;
  justify-content: center;
  line-height: 18px;
  padding: 0 4px;
`;

const PanelName = styled.span`
  flex: ${(props) => (props.$wide ? '1' : 'none')};
  text-align: center;
  white-space: nowrap;
`;

const BigButton = styled.button`
  align-items: center;
  color: ${(props) => (props.$off ? '#a8a8a8' : '#333333')};
  display: flex;
  flex: none;
  flex-direction: column;
  gap: 3px;
  height: 72px;
  line-height: 17px;
  padding-top: 3px;
  white-space: pre;
  width: ${(props) => props.$w || 40}px;
  ${(props) => props.$on && css`
    background: linear-gradient(#c5dff3, #aed3f1);
    border: 1px solid #1c6fc0;
    margin: 0 5px;
    padding-top: 2px;
  `}
`;

const SmallColumn = styled.div`
  display: flex;
  flex: none;
  flex-direction: column;
  padding-left: ${(props) => props.$pad || 0}px;
  width: ${(props) => props.$w}px;
`;

const SmallButton = styled.button`
  align-items: center;
  color: ${(props) => (props.$off ? '#a8a8a8' : '#333333')};
  display: flex;
  gap: 5px;
  height: 24px;
  white-space: nowrap;
`;

const PanelRule = styled.span`
  background: #cbcbcb;
  flex: none;
  height: 72px;
  margin: 0 4px;
  width: 1px;
`;

const Big = ({ glyph: BigIcon, label, w, off, caret }) => (
  <BigButton $w={w} $off={off}>
    <BigIcon off={off} />
    {label}
    {caret ? <Caret w={5} h={3} /> : null}
  </BigButton>
);

const Small = ({ glyph: SmallIcon, label, name, off }) => (
  <SmallButton $off={off} aria-label={name || label}><SmallIcon />{label}</SmallButton>
);

const Group = ({ w, name, launcher, justify, children }) => (
  <Panel $w={w}>
    <PanelTools $justify={justify}>{children}</PanelTools>
    <PanelLabel>
      <PanelName $wide={launcher}>{name}</PanelName>
      {launcher ? <Launcher /> : null}
    </PanelLabel>
  </Panel>
);

const PlaceholderDuct = () => <Duct off />;
const PlaceholderPipe = () => <Pipe off />;

const Ribbon = () => (
  <RibbonBar>
    <Panel $w={49}>
      <PanelTools>
        <BigButton $w={38} $on><Cursor />修改</BigButton>
      </PanelTools>
      <PanelLabel><PanelName>选择</PanelName><Caret w={8} h={4} /></PanelLabel>
    </Panel>
    <Group w={279} name="HVAC" launcher>
      <Big glyph={Duct} label="风管" />
      <Big glyph={PlaceholderDuct} label={'风管\n占位符'} />
      <SmallColumn $w={110} $pad={7}>
        <Small glyph={DuctFitting} label="风管 管件" />
        <Small glyph={DuctAccessory} label="风管 附件" />
        <Small glyph={ToFlex} label="转换为 软风管" off />
      </SmallColumn>
      <PanelRule />
      <Big glyph={Flex} label={'软\n风管'} off />
      <Big glyph={Terminal} label={'风道\n末端'} w={38} />
    </Group>
    <Group w={81} name="预制" launcher>
      <Big glyph={Fabrication} label={'预制\n零件'} />
      <Big glyph={MultiPoint} label={'多点\n布线'} w={38} off />
    </Group>
    <Group w={93} name="P&ID 协作" launcher justify="center">
      <Big glyph={PidConvert} label="P&ID 模型转换" w={90} />
    </Group>
    <Group w={47} name="机械" launcher justify="center">
      <Big glyph={Fan} label={'机械\n设备'} />
    </Group>
    <Group w={235} name="卫浴和管道" launcher>
      <Big glyph={Pipe} label="管道" />
      <Big glyph={PlaceholderPipe} label={'管道\n占位符'} />
      <Big glyph={Pipes} label={'平行\n管道'} />
      <SmallColumn $w={26} $pad={4}>
        <Small glyph={PipeFitting} name="管件" />
        <Small glyph={Valve} name="管路附件" />
        <Small glyph={FlexPipe} name="软管" off />
      </SmallColumn>
      <PanelRule />
      <Big glyph={Toilet} label={'卫浴\n装置'} />
      <Big glyph={Sprinkler} label="喷头" w={38} />
    </Group>
    <Group w={334} name="电气" launcher>
      <Big glyph={Wire} label="导线" w={50} off caret />
      <PanelRule />
      <Big glyph={Tray} label={'电缆\n桥架'} w={38} />
      <Big glyph={Conduit} label="线管" w={38} />
      <Big glyph={Conduits} label={'平行\n线管'} w={38} />
      <SmallColumn $w={26} $pad={5}>
        <Small glyph={ConduitFitting} name="线管配件" />
        <Small glyph={FlexConduit} name="电缆桥架配件" />
      </SmallColumn>
      <PanelRule />
      <Big glyph={ElecEquip} label={'电气\n设备'} w={41} />
      <Big glyph={Switch} label="设备" w={42} caret />
      <Big glyph={Light} label={'照明\n设备'} w={41} />
    </Group>
    <Group w={51} name="模型" justify="center">
      <Big glyph={Component} label="构件" caret />
    </Group>
    <Group w={72} name="工作平面">
      <Big glyph={WorkPlane} label="设置" />
      <SmallColumn $w={24} $pad={4}>
        <Small glyph={ShowPlane} name="显示" />
        <Small glyph={RefPlane} name="参照平面" />
        <Small glyph={Viewer} name="查看器" off />
      </SmallColumn>
    </Group>
  </RibbonBar>
);

const OptionsBar = styled.div`
  background: #eeeeee;
  flex: none;
  height: 26px;
  margin-bottom: 2px;
`;

/*
 * properties palette
 */

const Workspace = styled.main`
  display: flex;
  flex: 1;
  gap: 2px;
  min-height: 0;
`;

const Palette = styled.aside`
  background: #f0f0f0;
  display: flex;
  flex: none;
  flex-direction: column;
  padding-right: 2px;
  width: 218px;
`;

const PaletteHead = styled.div`
  align-items: center;
  border-bottom: 1px solid #d0d0d0;
  color: #333333;
  display: flex;
  flex: none;
  height: 21px;
  justify-content: space-between;
  padding: 0 3px 0 2px;
`;

const TypeSelector = styled.button`
  align-items: center;
  border-bottom: 1px solid #cccccc;
  border-right: 1px solid #cccccc;
  display: flex;
  flex: none;
  gap: 4px;
  height: 71px;
  line-height: 16px;
  padding: 0 1px 0 3px;
  text-align: left;
`;

const Thumb = styled.span`
  border: 1px solid #cfcfcf;
  display: grid;
  flex: none;
  height: 66px;
  place-items: center;
  width: 66px;
`;

const TypeName = styled.span`
  flex: 1;
  padding-top: 2px;
`;

const TypeRow = styled.div`
  align-items: center;
  display: flex;
  flex: none;
  gap: 6px;
  height: 26px;
`;

const SelectWrap = styled.label`
  align-items: center;
  background: ${(props) => (props.$raised ? 'linear-gradient(#f6f6f6, #dcdcdc)' : '#fdfdfd')};
  border: ${(props) => (props.$raised ? '1px solid #777777' : 'none')};
  border-radius: ${(props) => (props.$raised ? 3 : 0)}px;
  display: flex;
  flex: none;
  height: ${(props) => (props.$raised ? 24 : 18)}px;
  padding-right: 4px;
  width: ${(props) => props.$w}px;
`;

const Select = styled.select`
  appearance: none;
  background: none;
  border: none;
  color: ${(props) => (props.$muted ? '#777777' : '#000000')};
  flex: 1;
  padding: 0 3px;
`;

const TypeButton = styled.button`
  align-items: center;
  color: #000000;
  display: flex;
  gap: 5px;
`;

const GridArea = styled.div`
  background: #ffffff;
  display: flex;
  flex: 1;
  min-height: 0;
  overflow: hidden;
`;

const GridScroll = styled.div`
  flex: 1;
  overflow: hidden;
`;

const PropTable = styled.table`
  border-collapse: collapse;
  color: #000000;
  line-height: 16px;
  table-layout: fixed;
  width: 100%;
  th, td {
    border-bottom: 1px dotted #888888;
    border-right: 1px dotted #888888;
    font-weight: normal;
    height: 20px;
    overflow: hidden;
    padding: 0 0 0 2px;
    text-align: left;
    text-overflow: ellipsis;
    white-space: nowrap;
  }
  th[scope="row"] {
    padding-left: 10px;
  }
`;

const NameCol = styled.col`
  width: 93px;
`;

const ExtraCol = styled.col`
  width: 12px;
`;

const GroupRow = styled.tr`
  background: #dcdcdc;
  && th {
    border-right: none;
  }
`;

const GroupHead = styled.span`
  align-items: center;
  display: flex;
  justify-content: space-between;
  padding-right: 6px;
`;

const PropRow = styled.tr`
  color: ${(props) => (props.$muted ? '#858585' : '#000000')};
`;

const ScaleInput = styled.input`
  border: 1px solid #000000;
  display: block;
  height: 19px;
  margin-left: -2px;
  padding: 0 5px;
  width: calc(100% + 2px);
`;

const CellButton = styled.button`
  background: linear-gradient(#f6f6f6, #d2d2d2);
  border: 1px solid #777777;
  border-bottom-width: 2px;
  border-radius: 3px;
  display: block;
  height: 18px;
  line-height: 14px;
  width: ${(props) => props.$w || '100%'};
`;

const CheckBox = styled.input`
  appearance: none;
  background: linear-gradient(135deg, #c4c8cc, #f6f6f6);
  border: 1px solid #8e8f8f;
  box-shadow: inset 0 0 0 2px #f4f4f4;
  display: block;
  height: 13px;
  margin: 0 0 0 1px;
  width: 13px;
`;

const VScroll = styled.div`
  align-items: center;
  background: #f1f1f1;
  display: flex;
  flex: none;
  flex-direction: column;
  padding: 7px 0;
  width: ${(props) => props.$w || 17}px;
`;

const VTrack = styled.div`
  display: flex;
  flex: 1;
  flex-direction: column;
  justify-content: ${(props) => (props.$middle ? 'center' : 'flex-start')};
  margin: ${(props) => (props.$middle ? 0 : '8px 0 4px')};
`;

const ScrollThumb = styled.span`
  align-items: center;
  background: ${(props) => (props.$across ? 'linear-gradient(#f7f7f7, #cfcfcf)' : 'linear-gradient(90deg, #f7f7f7, #c9c9c9)')};
  border: 1px solid #999999;
  border-radius: 2px;
  display: flex;
  height: ${(props) => props.$h || '15px'};
  justify-content: center;
  width: ${(props) => props.$w || '15px'};
`;

const PaletteFoot = styled.div`
  align-items: center;
  display: flex;
  flex: none;
  height: 25px;
  justify-content: space-between;
  padding: 0 2px 2px;
`;

const HelpLink = styled.a`
  color: #0a6cc4;
`;

const ApplyButton = styled.button`
  background: #f4f4f4;
  border: 1px solid #b4b4b4;
  border-radius: 3px;
  color: #838383;
  height: 19px;
  width: 73px;
`;

const sections = [
  ['图形', [
    ['视图比例', '1 : 100', 'input'],
    ['比例值 1:', '100', 'muted'],
    ['显示模型', '标准'],
    ['详细程度', '精细'],
    ['零件可见性', '显示原状态'],
    ['可见性/图形...', '编辑...', 'button'],
    ['图形显示选项', '编辑...', 'button'],
    ['当比例粗略度...', '\u00a01 : 5000'],
    ['规程', '卫浴'],
    ['显示隐藏线', '按规程'],
    ['颜色方案位置', '背景'],
    ['颜色方案', '<无>', 'button'],
    ['默认分析显示...', '无'],
    ['参照标签', '', 'muted'],
    ['子规程', '卫浴', 'more'],
    ['日光路径', '', 'check']
  ]],
  ['范围', [
    ['裁剪视图', '', 'check'],
    ['裁剪区域可见', '', 'check']
  ]]
];

const PropValue = ({ name, value, kind }) => {
  if (kind === 'input') {
    return <ScaleInput aria-label={name} defaultValue={value} />;
  }
  if (kind === 'button') {
    return <CellButton>{value}</CellButton>;
  }
  if (kind === 'check') {
    return <CheckBox type="checkbox" aria-label={name} />;
  }
  return value;
};

const Properties = () => (
  <Palette>
    <PaletteHead>属性<button aria-label="关闭属性"><Close /></button></PaletteHead>
    <TypeSelector>
      <Thumb><Arrow /></Thumb>
      <TypeName>立面<br />建筑立面</TypeName>
      <Caret w={8} h={4} />
    </TypeSelector>
    <TypeRow>
      <SelectWrap $raised $w={133}>
        <Select aria-label="视图"><option>立面: 北 - 卫浴</option></Select>
        <Caret w={7} h={4} color="#000" />
      </SelectWrap>
      <TypeButton><EditType />编辑类型</TypeButton>
    </TypeRow>
    <GridArea>
      <GridScroll>
        <PropTable>
          <colgroup><NameCol /><col /><ExtraCol /></colgroup>
          <tbody>
            {sections.map(([title, rows]) => (
              <React.Fragment key={title}>
                <GroupRow>
                  <th colSpan="3" scope="colgroup"><GroupHead>{title}<Collapse /></GroupHead></th>
                </GroupRow>
                {rows.map(([name, value, kind]) => (
                  <PropRow key={name} $muted={kind === 'muted'}>
                    <th scope="row">{name}</th>
                    <td><PropValue name={name} value={value} kind={kind} /></td>
                    <td>{kind === 'more' ? <CellButton $w="9px" aria-label="更多" /> : null}</td>
                  </PropRow>
                ))}
              </React.Fragment>
            ))}
          </tbody>
        </PropTable>
      </GridScroll>
      <VScroll>
        <Up />
        <VTrack>
          <ScrollThumb $h="200px">
            <Icon w={6} h={8} stroke="#777"><path d="M0 0.5H6M0 3.5H6M0 6.5H6" /></Icon>
          </ScrollThumb>
        </VTrack>
        <Caret />
      </VScroll>
    </GridArea>
    <PaletteFoot>
      <HelpLink href="#help">属性帮助</HelpLink>
      <ApplyButton disabled>应用</ApplyButton>
    </PaletteFoot>
  </Palette>
);

/*
 * drawing area
 */

const Center = styled.section`
  display: flex;
  flex: 1;
  flex-direction: column;
  min-width: 0;
`;

const DocTabs = styled.div`
  display: flex;
  flex: none;
  height: 20px;
`;

const DocTab = styled.button`
  align-items: center;
  background: ${(props) => (props.$active ? '#ffffff' : 'none')};
  color: #222222;
  display: flex;
  gap: 7px;
  padding: 0 5px;
  width: 128px;
`;

const DocName = styled.span`
  flex: 1;
  font-weight: ${(props) => (props.$active ? 500 : 400)};
  text-align: left;
`;

const DocMenu = styled.button`
  margin-left: auto;
  padding: 0 6px;
`;

const ViewArea = styled.div`
  background: #f1f1f1;
  display: flex;
  flex: 1;
  min-height: 0;
  padding-right: 1px;
`;

const Canvas = styled.div`
  background: #fefefe;
  display: grid;
  flex: 1;
  min-width: 0;
  overflow: hidden;
  padding-bottom: 24px;
  place-items: center;
  position: relative;
`;

const NavBar = styled.div`
  align-items: center;
  background: #f4f4f4;
  border: 2px solid #c4c4c4;
  border-radius: 6px;
  display: flex;
  flex-direction: column;
  height: 118px;
  padding: 1px 2px;
  position: absolute;
  right: 1px;
  top: 2px;
  width: 36px;
`;

const NavButton = styled.button`
  align-items: center;
  align-self: ${(props) => (props.$end ? 'flex-end' : 'center')};
  display: flex;
  flex-direction: column;
  gap: 6px;
`;

const NavRule = styled.span`
  background: #c4c4c4;
  flex: none;
  height: 1px;
  margin: 5px 0 7px;
  width: 26px;
`;

const NavSpacer = styled.span`
  flex: ${(props) => props.$grow || 1};
`;

const Dot = ({ d }) => (
  <Icon w={8} stroke="#fff"><circle cx="4" cy="4" r="4" fill="#b0b0b0" stroke="none" /><path d={d} /></Icon>
);

const PipeDrawing = () => (
  <Icon w={643} h={44} stroke="#080808">
    <path d="M1.5 4.5H91V5.5H191V6.5H291V7.5H325.5V33.5H243V32.5H143V31.5H43V30.5H1.5Z" fill="url(#pipe)" />
    <path d="M325.5 6.5H337.5V34.5H324.5V19.5H325.5Z" fill="url(#pipe)" />
    <path d="M337.5 5.5L343.5 0.5V40.5L337.5 35.5Z" fill="#555" />
    <path d="M343.5 0.5H357.5V41.5H349V40.5H343.5Z" fill="url(#pipe)" />
    <path d="M357.5 1.5H410V2.5H535V3.5H641.5V42.5H594V41.5H469V40.5H357.5Z" fill="url(#pipe)" />
    <path d="M62 17.5H68M75 18.5H82M92 18.5H93M100 18.5H104M162 18.5H168M175 19.5H182M200 19.5H204M262 19.5H268M275 20.5H282M283 20.5H287M342 20.5H349M363 20.5H375M465 21.5H478M488 21.5H500M590 22.5H603M613 22.5H625" />
  </Icon>
);

const ControlBar = styled.div`
  align-items: center;
  background: #f0f0f0;
  display: flex;
  flex: none;
  height: 21px;
`;

const ScaleButton = styled.button`
  color: #000000;
  padding: 0 13px 0 22px;
  white-space: pre;
`;

const HTrack = styled.div`
  align-items: center;
  background: #ebebeb;
  display: flex;
  flex: 1;
  height: 17px;
  justify-content: center;
`;

const HScroll = styled.div`
  align-items: center;
  display: flex;
  flex: 1;
  gap: 4px;
  padding: 0 6px;
`;

const Corner = styled.span`
  flex: none;
  width: 16px;
`;

const viewControls = [
  ['详细程度', Mesh],
  ['视觉样式', BoxIcon],
  ['日光路径', Sun],
  ['阴影', Shadow],
  ['裁剪视图', Crop],
  ['裁剪区域', () => <Crop bulb />],
  ['临时隐藏', Glasses],
  ['显示隐藏', Bulb],
  ['临时视图', Temp],
  ['分析模型', Analytic],
  ['约束', Constraints]
];

const Drawing = () => (
  <Center>
    <DocTabs>
      <DocTab><PlanView /><DocName>1 - 卫浴</DocName></DocTab>
      <DocTab $active><Arrow w={16} h={14} /><DocName $active>北 - 卫浴</DocName><Close /></DocTab>
      <DocMenu aria-label="视图列表"><MenuMark /></DocMenu>
    </DocTabs>
    <ViewArea>
      <Canvas>
        <PipeDrawing />
        <NavBar>
          <NavButton $end aria-label="关闭导航栏"><Dot d="M2.5 2.5L5.5 5.5M5.5 2.5L2.5 5.5" /></NavButton>
          <NavSpacer />
          <NavButton aria-label="控制盘">
            <Icon w={24} h={24} stroke="#b0b0b0">
              <path d="M10 1H17Q19 1 19 3V10A9 9 0 1 1 10 1Z" fill="#f0f0f0" strokeWidth="1.5" />
              <circle cx="10" cy="10" r="4.5" />
              <Glyph x="18" y="22" $size={10} $color="#4f9cbc">2D</Glyph>
            </Icon>
            <Caret w={5} h={3} color="#999" />
          </NavButton>
          <NavRule />
          <NavButton aria-label="缩放">
            <Icon w={17} h={18} stroke="#a4a4a4">
              <path d="M0.5 1.5H10.5V12.5H0.5Z" fill="#cacab6" />
              <circle cx="10.5" cy="11" r="3.5" fill="#fff" />
              <path d="M13 13.5L16 16.5" strokeWidth="2" />
            </Icon>
            <Caret w={5} h={3} color="#999" />
          </NavButton>
          <NavSpacer $grow={2} />
          <NavButton $end aria-label="导航栏选项"><Dot d="M2 3.5H6M2 5.5H6" /></NavButton>
        </NavBar>
      </Canvas>
      <VScroll>
        <Up />
        <VTrack $middle><ScrollThumb /></VTrack>
        <Caret />
      </VScroll>
    </ViewArea>
    <ControlBar>
      <ScaleButton>{'1  :  100'}</ScaleButton>
      {viewControls.map(([label, ViewIcon]) => (
        <ToolButton key={label} aria-label={label} $w={21}><ViewIcon /></ToolButton>
      ))}
      <HScroll>
        <Left />
        <HTrack><ScrollThumb $across /></HTrack>
        <Right />
      </HScroll>
      <Corner />
    </ControlBar>
  </Center>
);

/*
 * project browser
 */

const BrowserPanel = styled.aside`
  background: #ffffff;
  display: flex;
  flex: none;
  flex-direction: column;
  overflow: hidden;
  width: 164px;
`;

const BrowserHead = styled(PaletteHead)`
  background: #eeeeee;
  border: none;
  height: 20px;
  padding: 0 0 0 4px;
`;

const Tree = styled.ul`
  color: #000000;
  flex: 1;
  list-style: none;
  margin: 0;
  overflow: hidden;
  padding: 0;
`;

const TreeRow = styled.li`
  align-items: center;
  display: flex;
  height: 20px;
  white-space: nowrap;
`;

const Dash = styled.span`
  border-top: 1px dotted #999999;
  flex: none;
  margin-right: ${(props) => (props.$tight ? 0 : 2)}px;
  width: ${(props) => props.$w}px;
`;

const TreeIcon = styled.span`
  display: grid;
  flex: none;
  margin-right: 6px;
  place-items: center;
  width: 16px;
`;

const TreeName = styled.span`
  background: ${(props) => (props.$on ? '#e2e2e2' : 'none')};
  font-weight: ${(props) => (props.$on ? 'bold' : 'normal')};
  line-height: 20px;
  margin-left: ${(props) => (props.$on ? -2 : 0)}px;
  padding: ${(props) => (props.$on ? '0 2px' : 0)};
`;

// connector glyph: lines above and below the node, the stub to its right, the +/- box
const Node = ({ kind }) => (
  <Icon w={20} stroke="#999">
    {/[iu]/.test(kind) ? <path d="M10.5 0V10" strokeDasharray="1 1" /> : null}
    {/[id]/.test(kind) ? <path d="M10.5 10V20" strokeDasharray="1 1" /> : null}
    {/[-+.]/.test(kind) ? <path d="M10 10.5H20" strokeDasharray="1 1" /> : null}
    {/[-+]/.test(kind) ? (
      <>
        <rect x="6.5" y="6.5" width="8" height="8" rx="1" fill="#fff" stroke="#919191" />
        <path d={kind.includes('+') ? 'M8 10.5H13M10.5 8V13' : 'M8 10.5H13'} stroke="#2a4fa0" />
      </>
    ) : null}
  </Icon>
);

// one entry per indent column: i = line through, u = line up, d = line down
const tree = [
  [['d-'], '视图 (规程)', ViewsIcon],
  [['i', 'u-'], '卫浴'],
  [['i', '', 'u-'], '卫浴'],
  [['i', '', '', 'i+'], '楼层平面'],
  [['i', '', '', 'i+'], '天花板平面'],
  [['i', '', '', 'i+'], '三维视图'],
  [['i', '', '', 'u-'], '立面 (建筑立面)'],
  [['i', '', '', '', 'i.'], '东 - 卫浴'],
  [['i', '', '', '', 'i.'], '北 - 卫浴'],
  [['i', '', '', '', 'i.'], '南 - 卫浴'],
  [['i', '', '', '', 'u.'], '西 - 卫浴'],
  [['i.'], '图例', LegendIcon],
  [['i.'], '明细表/数量 (全部)', TableIcon],
  [['i.'], '图纸 (全部)', SheetIcon],
  [['i+'], '族', FamilyIcon],
  [['i+'], '组', GroupIcon],
  [['u.'], 'Revit 链接', LinkIcon]
];

const ProjectBrowser = () => (
  <BrowserPanel>
    <BrowserHead>项目浏览器 - 项目2<button aria-label="关闭浏览器"><Close /></button></BrowserHead>
    <Tree>
      {tree.map(([cols, name, NodeIcon], i) => (
        <TreeRow key={i}>
          {cols.map((kind, c) => <Node key={c} kind={kind} />)}
          <Dash $w={NodeIcon ? 2 : 6} $tight={Boolean(NodeIcon)} />
          {NodeIcon ? <TreeIcon><NodeIcon /></TreeIcon> : null}
          <TreeName $on={name === '北 - 卫浴'}>{name}</TreeName>
        </TreeRow>
      ))}
    </Tree>
    <ControlBar>
      <HScroll>
        <Left />
        <HTrack>
          <ScrollThumb $across $w="90%">
            <Icon w={8} h={6} stroke="#777"><path d="M0.5 0V6M3.5 0V6M6.5 0V6" /></Icon>
          </ScrollThumb>
        </HTrack>
        <Right />
      </HScroll>
    </ControlBar>
  </BrowserPanel>
);

/*
 * status bar
 */

const StatusBar = styled.footer`
  align-items: center;
  color: #000000;
  display: flex;
  flex: none;
  height: 23px;
  overflow: hidden;
  padding-top: 3px;
`;

const StatusText = styled.span`
  flex: 1;
  overflow: hidden;
  white-space: nowrap;
`;

const StatusGroup = styled.div`
  align-items: center;
  display: flex;
  flex: none;
  width: 780px;
`;

const Count = styled.span`
  font-weight: 500;
  width: 28px;
`;

const StatusEnd = styled.div`
  display: flex;
  margin-left: auto;
  padding-right: 2px;
`;

const Status = () => (
  <StatusBar>
    <StatusText>单击可进行选择; 按 Tab 键并单击可选择其他项目; 按 Ctrl 键并单击可将新项目添加到选择集</StatusText>
    <StatusGroup>
      <ToolButton aria-label="工作集" $w={31}><WorksetsOff /></ToolButton>
      <SelectWrap $w={204}>
        <Select aria-label="活动工作集" />
        <Caret w={8} h={4} color="#999" />
      </SelectWrap>
      <ToolButton aria-label="可编辑项" $w={30}><Filter /></ToolButton>
      <Count>:0</Count>
      <ToolButton aria-label="设计选项"><DesignOption /></ToolButton>
      <ToolButton aria-label="添加到集" $w={30}><AddTo /></ToolButton>
      <SelectWrap $w={204}>
        <Select aria-label="主设计选项" $muted><option>主模型</option></Select>
        <Caret w={8} h={4} color="#999" />
      </SelectWrap>
      <StatusEnd>
        <ToolButton aria-label="选择链接" $w={26}><PickLink /></ToolButton>
        <ToolButton aria-label="按面选择" $w={26}><PickFace /></ToolButton>
      </StatusEnd>
    </StatusGroup>
  </StatusBar>
);

const Watermark = styled.div`
  align-items: flex-end;
  bottom: 7px;
  display: flex;
  opacity: 0.7;
  pointer-events: none;
  position: absolute;
  right: 15px;
`;

const Brand = styled.span`
  color: #4a96b4;
  font-family: "DejaVu Sans Mono", monospace;
  font-size: 25px;
  font-weight: bold;
  line-height: 28px;
  padding-bottom: 4px;
`;

const Elephant = () => (
  <Icon w={88} h={54} stroke="none">
    <path d="M0 36L12 30L20 52H6Z" fill="#a9b8c4" />
    <path d="M4 20L14 14L30 12L30 52H12Z" fill="#5cbcd0" />
    <path d="M38 16L54 15Q64 20 66 30Q70 38 78 35L82 28Q84 44 70 45Q62 46 58 38L48 52H38Z" fill="#8fd2e2" />
    <path d="M58 38L64 42L60 52H54Z" fill="#d8cf96" />
    <path d="M14 10L32 0L50 8L48 40L46 52H40V42H28V52H22Z" fill="#5ecbf2" />
    <circle cx="55" cy="29" r="2" fill="#fff" />
  </Icon>
);

const App = () => (
  <Page>
    <GlobalStyle />
    <Gradients />
    <Title />
    <Tabs />
    <Ribbon />
    <OptionsBar />
    <Workspace>
      <Properties />
      <Drawing />
      <ProjectBrowser />
    </Workspace>
    <Status />
    <Watermark>
      <Elephant />
      <Brand>TUITUISOFT</Brand>
    </Watermark>
  </Page>
);

export default App;
